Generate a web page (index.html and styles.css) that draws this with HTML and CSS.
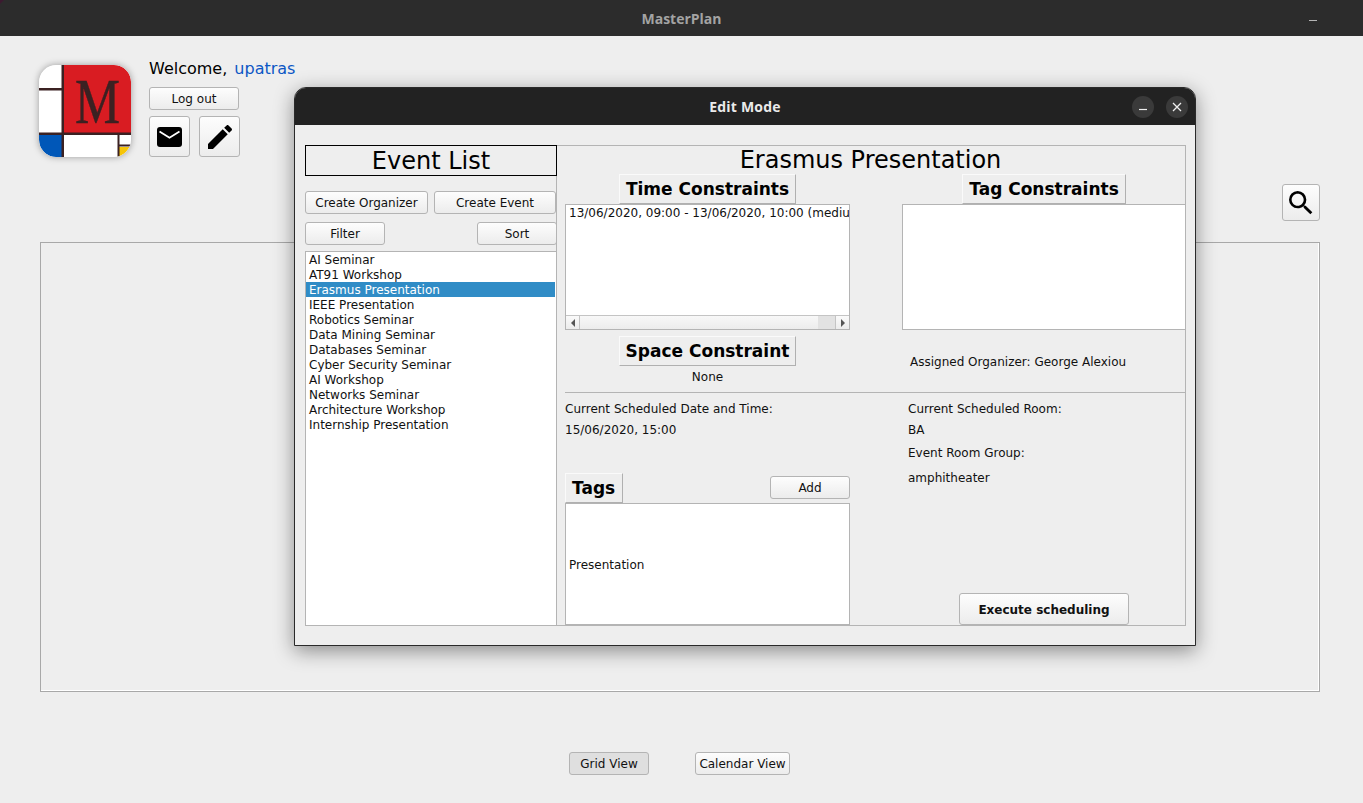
FILE: index.html
```html
<!DOCTYPE html>
<html lang="en">
<head>
<meta charset="utf-8">
<title>MasterPlan</title>
<link rel="stylesheet" href="styles.css">
</head>
<body>
<header class="titlebar">
  <span class="titlebar-name">MasterPlan</span>
  <span class="titlebar-min"></span>
</header>
<main class="main">
  <section class="header">
    <svg class="logo" viewBox="0 0 92 92" aria-label="MasterPlan logo">
      <defs><clipPath id="logo-clip"><rect width="92" height="92" rx="17"/></clipPath></defs>
      <g clip-path="url(#logo-clip)">
        <rect width="92" height="92" fill="#fff"/>
        <rect x="24" width="68" height="68" fill="#d91c22"/>
        <rect y="69" width="23" height="23" fill="#0057b8"/>
        <rect x="79" y="82" width="13" height="10" fill="#f6c508"/>
        <g fill="#3b2122">
          <rect x="22.500" width="2.500" height="92"/>
          <rect y="23" width="23" height="2.500"/>
          <rect y="67.500" width="92" height="2.500"/>
          <rect x="78.500" y="68" width="2" height="24"/>
          <rect x="79" y="79.500" width="13" height="2"/>
        </g>
        <text class="logo-m" x="36" y="58" textLength="45" lengthAdjust="spacingAndGlyphs">M</text>
      </g>
    </svg>
    <div class="user">
      <div class="welcome">Welcome, <a class="user-link">upatras</a></div>
      <button class="btn btn-logout">Log out</button>
      <div class="user-actions">
        <button class="btn btn-icon" aria-label="Messages">
          <svg class="icon-mail" viewBox="0 0 25 20"><rect width="25" height="20" rx="3" fill="#000"/><path d="M2.500 4.500 12.500 10.800 22.500 4.500" fill="none" stroke="#fff" stroke-width="1.800"/></svg>
        </button>
        <button class="btn btn-icon btn-icon-edit" aria-label="Edit">
          <svg class="icon-edit" viewBox="0 0 24 24"><path d="M3 17.250V21h3.750L17.810 9.940l-3.750-3.750L3 17.250zM20.710 7.040c.390-.390.390-1.020 0-1.410l-2.340-2.340c-.390-.390-1.020-.390-1.410 0l-1.830 1.830 3.750 3.750 1.830-1.830z"/></svg>
        </button>
      </div>
    </div>
    <button class="btn btn-search" aria-label="Search">
      <svg class="icon-search" viewBox="0 0 24 24"><path d="M15.500 14h-.790l-.280-.270A6.470 6.470 0 0 0 16 9.500 6.500 6.500 0 1 0 9.500 16c1.610 0 3.090-.590 4.230-1.570l.270.280v.790l5 4.990L20.490 19l-4.990-5zm-6 0C7.010 14 5 11.990 5 9.500S7.010 5 9.500 5 14 7.010 14 9.500 11.990 14 9.500 14z"/></svg>
    </button>
  </section>
  <section class="board"></section>
  <nav class="views">
    <button class="btn btn-view btn-view-active">Grid View</button>
    <button class="btn btn-view btn-view-calendar">Calendar View</button>
  </nav>
</main>

<section class="dialog">
  <header class="dialog-title">
    <span>Edit Mode</span>
    <div class="dialog-controls">
      <span class="dialog-control"><svg viewBox="0 0 22 22"><path d="M7 13.500h8" stroke="#eee" stroke-width="1.200"/></svg></span>
      <span class="dialog-control"><svg viewBox="0 0 22 22"><path d="M7 7l8 8M15 7l-8 8" stroke="#eee" stroke-width="1.300"/></svg></span>
    </div>
  </header>
  <div class="dialog-body">
    <aside class="events">
      <h2 class="events-title">Event List</h2>
      <div class="events-row events-row-create">
        <button class="btn btn-organizer">Create Organizer</button>
        <button class="btn btn-event">Create Event</button>
      </div>
      <div class="events-row events-row-filter">
        <button class="btn btn-filter">Filter</button>
        <button class="btn btn-filter">Sort</button>
      </div>
      <ul class="events-list">
        <li>AI Seminar</li>
        <li>AT91 Workshop</li>
        <li class="is-selected">Erasmus Presentation</li>
        <li>IEEE Presentation</li>
        <li>Robotics Seminar</li>
        <li>Data Mining Seminar</li>
        <li>Databases Seminar</li>
        <li>Cyber Security Seminar</li>
        <li>AI Workshop</li>
        <li>Networks Seminar</li>
        <li>Architecture Workshop</li>
        <li>Internship Presentation</li>
      </ul>
    </aside>
    <section class="detail">
      <h1 class="detail-title">Erasmus Presentation</h1>
      <div class="detail-top">
        <div class="detail-col">
          <h3 class="raised">Time Constraints</h3>
          <div class="listbox listbox-time">
            <div class="listbox-text">13/06/2020, 09:00 - 13/06/2020, 10:00 (medium)</div>
            <div class="hscroll">
              <span class="hscroll-btn"><i class="arrow arrow-left"></i></span>
              <span class="hscroll-track"></span>
              <span class="hscroll-thumb"></span>
              <span class="hscroll-btn hscroll-btn-right"><i class="arrow arrow-right"></i></span>
            </div>
          </div>
          <h3 class="raised raised-space">Space Constraint</h3>
          <p class="none-text">None</p>
        </div>
        <div class="detail-col">
          <h3 class="raised">Tag Constraints</h3>
          <div class="listbox listbox-tags"></div>
          <p class="assigned">Assigned Organizer: George Alexiou</p>
        </div>
      </div>
      <hr class="divider">
      <div class="detail-bottom">
        <div class="bottom-left">
          <p class="info info-first">Current Scheduled Date and Time:</p>
          <p class="info info-date">15/06/2020, 15:00</p>
          <div class="tags-head">
            <h3 class="raised raised-tags">Tags</h3>
            <button class="btn btn-add">Add</button>
          </div>
          <div class="tags-box">Presentation</div>
        </div>
        <div class="bottom-right">
          <p class="info info-first">Current Scheduled Room:</p>
          <p class="info info-date">BA</p>
          <p class="info info-group">Event Room Group:</p>
          <p class="info info-room">amphitheater</p>
          <button class="btn btn-execute">Execute scheduling</button>
        </div>
      </div>
    </section>
  </div>
</section>
</body>
</html>
```
FILE: styles.css
```css
* { box-sizing: border-box; }
html, body { margin: 0; padding: 0; }
body {
  position: relative;
  width: 1363px;
  height: 803px;
  overflow: hidden;
  background: #eeeeee;
  color: #111;
  font-family: "DejaVu Sans", sans-serif;
  font-size: 12px;
}
h1, h2, h3, p, ul { margin: 0; padding: 0; }

.titlebar {
  position: relative;
  height: 36px;
  background: #2c2c2c;
  display: flex;
  align-items: center;
  justify-content: center;
}
.titlebar::before {
  content: "";
  position: absolute;
  left: 0;
  top: 0;
  border-style: solid;
  border-width: 4px 4px 0 0;
  border-color: #3c1a30 transparent transparent transparent;
}
.titlebar-name {
  font-family: "Open Sans", sans-serif;
  font-weight: 700;
  font-size: 14px;
  color: #a3a3a3;
}
.titlebar-min {
  position: absolute;
  right: 46px;
  top: 20px;
  width: 8px;
  height: 1px;
  background: #b5b5b5;
}

.btn {
  display: flex;
  align-items: center;
  justify-content: center;
  padding: 0;
  font-family: "DejaVu Sans", sans-serif;
  font-size: 12px;
  color: #111;
  border: 1px solid #b4b4b4;
  border-radius: 3px;
  background: linear-gradient(#fdfdfd, #ececec);
}

.main { padding: 22px 43px 0 39px; }
.header { display: flex; height: 163px; }
.logo {
  width: 92px;
  height: 92px;
  margin-top: 7px;
  flex: none;
  border-radius: 17px;
  box-shadow: 0 0 7px rgba(0, 0, 0, 0.35);
}
.logo-m {
  font-family: "Liberation Serif", serif;
  font-size: 64px;
  fill: #3b2122;
  stroke: #3b2122;
  stroke-width: 0.5px;
}
.user { margin-left: 18px; }
.welcome {
  height: 20px;
  line-height: 22px;
  font-size: 16px;
  color: #000;
  white-space: pre;
}
.user-link { color: #0b57c5; margin-left: 2px; }
.btn-logout { width: 90px; height: 23px; margin-top: 9px; }
.user-actions { display: flex; gap: 9px; margin-top: 6px; }
.btn-icon { width: 41px; height: 41px; }
.icon-mail { width: 25px; height: 20px; display: block; }
.icon-edit { width: 32px; height: 32px; display: block; }
.btn-search {
  width: 38px;
  height: 37px;
  margin-left: auto;
  align-self: flex-end;
}
.icon-search { width: 32px; height: 32px; display: block; }

.board {
  width: 1280px;
  height: 450px;
  margin: 21px 0 0 1px;
  border: 1px solid #a8a8a8;
  box-shadow: inset -1px -1px 0 #fff;
}
.views {
  display: flex;
  justify-content: center;
  gap: 46px;
  margin-top: 60px;
}
.btn-view { height: 23px; }
.btn-view-active { width: 80px; background: #dfdfdf; }
.btn-view-calendar { width: 95px; }

/* floating window on the desktop */
.dialog {
  position: absolute;
  left: 294px;
  top: 87px;
  width: 902px;
  height: 559px;
  background: #eeeeee;
  border: 1px solid #2a2a2a;
  border-radius: 12px 12px 0 0;
  box-shadow: 0 5px 20px rgba(0, 0, 0, 0.42);
}
.dialog-title {
  position: relative;
  height: 37px;
  background: #222;
  border-radius: 11px 11px 0 0;
  display: flex;
  align-items: center;
  justify-content: center;
  font-family: "Open Sans", sans-serif;
  font-weight: 700;
  font-size: 14px;
  letter-spacing: 0.2px;
  color: #eaeaea;
}
.dialog-controls {
  position: absolute;
  right: 7px;
  top: 8px;
  display: flex;
  gap: 12px;
}
.dialog-control {
  width: 22px;
  height: 22px;
  border-radius: 50%;
  background: #3a3a3a;
}
.dialog-control svg { display: block; width: 22px; height: 22px; }
.dialog-body {
  display: flex;
  padding: 20px 0 0 10px;
}

.events {
  position: relative;
  z-index: 1;
  width: 252px;
  flex: none;
  display: flex;
  flex-direction: column;
  height: 481px;
}
.events-title {
  height: 31px;
  line-height: 31px;
  border: 1px solid #000;
  font-size: 24px;
  font-weight: 400;
  text-align: center;
  color: #000;
}
.events-row { display: flex; height: 23px; }
.events-row-create { margin-top: 15px; gap: 6px; }
.events-row-filter { margin-top: 8px; justify-content: space-between; }
.btn-organizer { width: 123px; }
.btn-event { width: 122px; }
.btn-filter { width: 80px; }
.events-list {
  list-style: none;
  margin-top: 6px;
  flex: 1;
  background: #fff;
  border: 1px solid #b4b4b4;
}
.events-list li {
  height: 15px;
  line-height: 17px;
  padding-left: 3px;
  margin-right: 1px;
  white-space: nowrap;
}
.events-list .is-selected { background: #308cc6; color: #fff; }

.detail {
  width: 630px;
  height: 481px;
  margin-left: -1px;
  flex: none;
  border: 1px solid #b4b4b4;
  display: flex;
  flex-direction: column;
}
.detail-title {
  height: 28px;
  line-height: 28px;
  padding-right: 1px;
  font-size: 24px;
  font-weight: 400;
  text-align: center;
  color: #000;
}
.detail-top {
  display: grid;
  grid-template-columns: 285px 284px;
  column-gap: 52px;
  padding-left: 8px;
}
.detail-col {
  display: flex;
  flex-direction: column;
  align-items: center;
}
.raised {
  height: 30px;
  line-height: 28px;
  padding: 0 6px;
  font-size: 17px;
  font-weight: 700;
  color: #000;
  white-space: nowrap;
  background: #eeeeee;
  border: 1px solid;
  border-color: #fafafa #b0b0b0 #b0b0b0 #fafafa;
}
.raised-space { margin-top: 6px; }
.listbox {
  width: 100%;
  height: 126px;
  background: #fff;
  border: 1px solid #b4b4b4;
  display: flex;
  flex-direction: column;
}
.listbox-text {
  flex: 1;
  overflow: hidden;
  white-space: nowrap;
  padding: 1px 0 0 3px;
  line-height: 15px;
  min-height: 0;
}
.hscroll {
  display: flex;
  height: 14px;
  border-top: 1px solid #c4c4c4;
  flex: none;
}
.hscroll-btn {
  width: 14px;
  flex: none;
  display: flex;
  align-items: center;
  justify-content: center;
  background: linear-gradient(#fafafa, #ececec);
  border-right: 1px solid #c4c4c4;
}
.hscroll-btn-right { border-right: 0; border-left: 1px solid #c4c4c4; }
.hscroll-track { flex: 1; background: linear-gradient(#f8f8f8, #ececec); }
.hscroll-thumb { width: 17px; flex: none; background: #e2e2e2; }
.arrow { display: block; border-style: solid; border-color: transparent; }
.arrow-left { border-width: 4px 4px 4px 0; border-right-color: #555; }
.arrow-right { border-width: 4px 0 4px 4px; border-left-color: #555; }
.none-text {
  height: 22px;
  line-height: 22px;
  text-align: center;
}
.assigned {
  align-self: flex-start;
  margin: 25px 0 0 8px;
  line-height: 15px;
  white-space: nowrap;
}
.divider {
  width: 621px;
  height: 1px;
  margin: 4px 0 0 8px;
  border: 0;
  background: #b4b4b4;
  flex: none;
}
.detail-bottom {
  flex: 1;
  display: grid;
  grid-template-columns: 285px 284px;
  column-gap: 52px;
  padding-left: 8px;
  min-height: 0;
}
.bottom-left, .bottom-right {
  display: flex;
  flex-direction: column;
}
.info { line-height: 15px; white-space: nowrap; }
.info-first { margin-top: 9px; }
.info-date { margin-top: 6px; }
.info-group { margin-top: 8px; }
.info-room { margin-top: 10px; }
.bottom-right .info { margin-left: 6px; }
.tags-head {
  display: flex;
  justify-content: space-between;
  align-items: flex-start;
  margin-top: 35px;
}
.raised-tags { padding: 0 7px 0 6px; }
.btn-add { width: 80px; height: 23px; margin-top: 3px; }
.tags-box {
  flex: 1;
  background: #fff;
  border: 1px solid #b4b4b4;
  display: flex;
  align-items: center;
  padding: 2px 0 0 3px;
}
.btn-execute {
  width: 170px;
  height: 32px;
  padding-top: 2px;
  margin-top: auto;
  align-self: center;
  font-weight: 700;
}
```
